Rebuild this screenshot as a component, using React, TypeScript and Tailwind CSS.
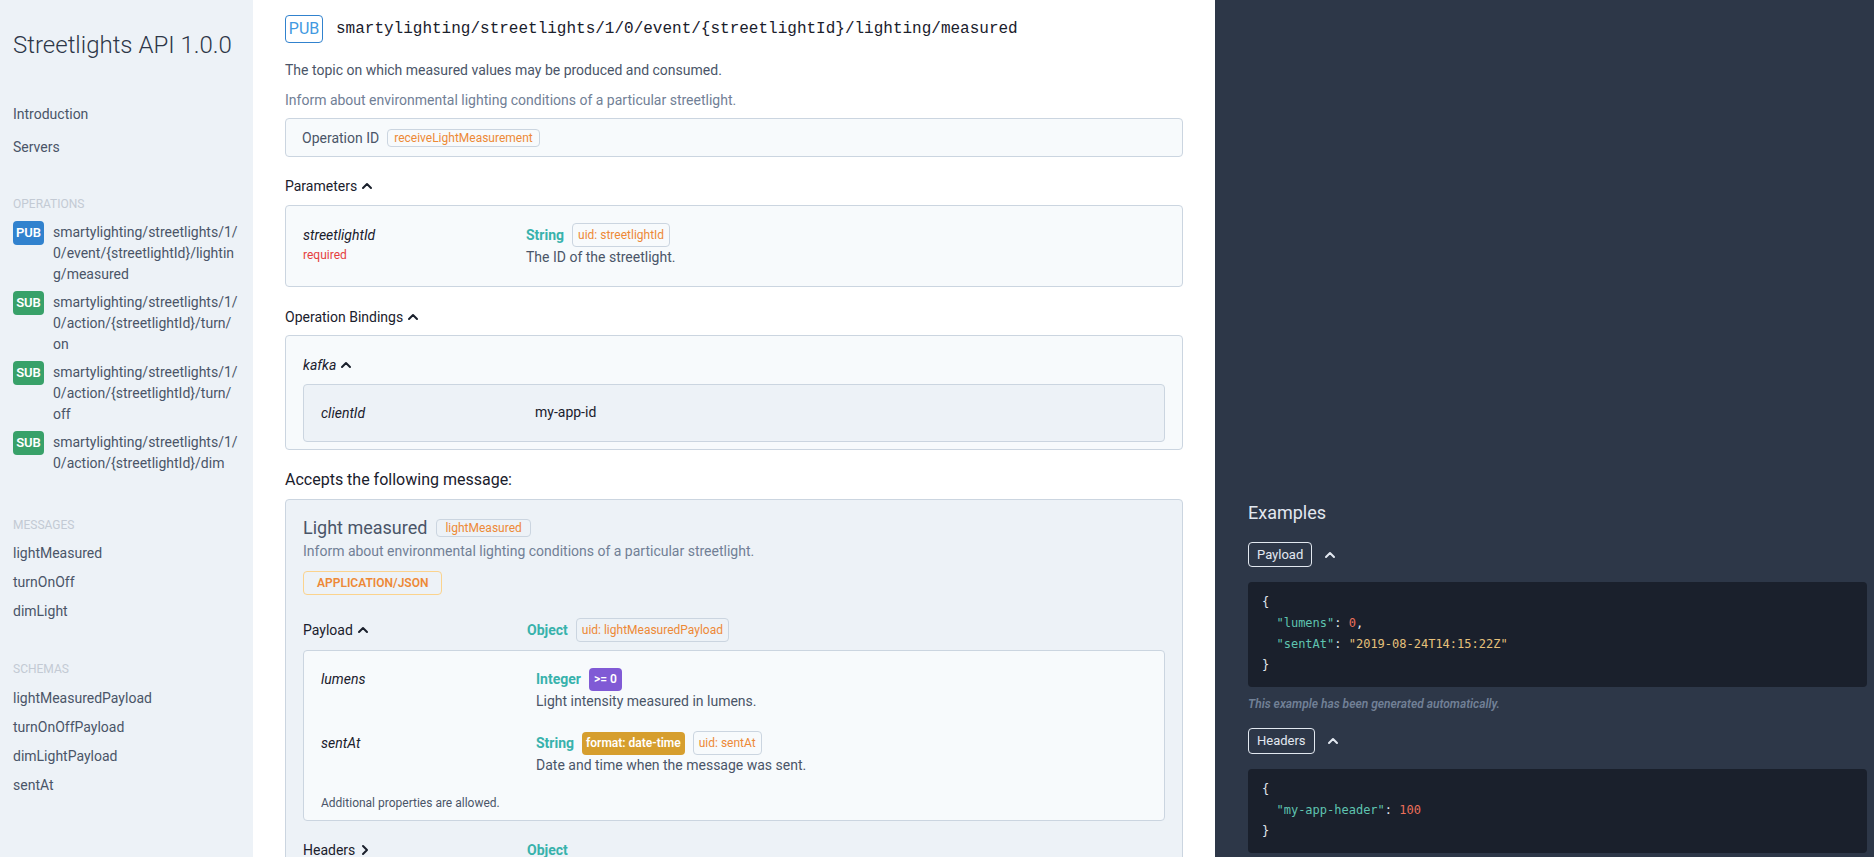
import React from 'react';

const sans = "font-['Roboto',sans-serif]";

function Caret({ up = true, className = '' }: { up?: boolean; className?: string }) {
  return (
    <svg viewBox="0 0 12 12" className={`h-3 w-3 ${className}`} fill="none" stroke="currentColor" strokeWidth="2" strokeLinecap="round" strokeLinejoin="round">
      {up ? <polyline points="2,8 6,4 10,8" /> : <polyline points="4,2 8,6 4,10" />}
    </svg>
  );
}

function Uid({ children }: { children: React.ReactNode }) {
  return (
    <span className="inline-flex h-6 items-center rounded border border-[#cbd5e0] px-[5px] text-xs text-[#ed8936]">
      {children}
    </span>
  );
}

const operations = [
  { kind: 'PUB', lines: ['smartylighting/streetlights/1/', '0/event/{streetlightId}/lightin', 'g/measured'] },
  { kind: 'SUB', lines: ['smartylighting/streetlights/1/', '0/action/{streetlightId}/turn/', 'on'] },
  { kind: 'SUB', lines: ['smartylighting/streetlights/1/', '0/action/{streetlightId}/turn/', 'off'] },
  { kind: 'SUB', lines: ['smartylighting/streetlights/1/', '0/action/{streetlightId}/dim'] },
];

function Sidebar() {
  return (
    <aside className="w-[253px] shrink-0 bg-[#edf2f7] px-[13px] pt-[29px] text-[#4a5568]">
      <h1 className="text-2xl leading-8 font-light text-[#2d3748]">Streetlights API 1.0.0</h1>
      <div className="mt-[43px] flex flex-col gap-[13px] text-sm leading-5">
        <div>Introduction</div>
        <div>Servers</div>
      </div>
      <div className="mt-[39px] text-xs leading-4 text-[#c3cad4] uppercase">Operations</div>
      <div className="mt-[10px] flex flex-col gap-[7px]">
        {operations.map((op, i) => (
          <div key={i} className="flex gap-[9px]">
            <span
              className={`mt-[-1px] flex h-6 w-[31px] shrink-0 items-center justify-center rounded text-[13px] font-semibold text-white ${op.kind === 'PUB' ? 'bg-[#3182ce]' : 'bg-[#38a169]'}`}
            >
              {op.kind}
            </span>
            <div className="text-sm leading-[21px]">
              {op.lines.map((l) => (
                <div key={l}>{l}</div>
              ))}
            </div>
          </div>
        ))}
      </div>
      <div className="mt-[43px] text-xs leading-4 text-[#c3cad4] uppercase">Messages</div>
      <div className="mt-[10px] flex flex-col gap-[9px] text-sm leading-5">
        <div>lightMeasured</div>
        <div>turnOnOff</div>
        <div>dimLight</div>
      </div>
      <div className="mt-[40px] text-xs leading-4 text-[#c3cad4] uppercase">Schemas</div>
      <div className="mt-[11px] flex flex-col gap-[9px] text-sm leading-5">
        <div>lightMeasuredPayload</div>
        <div>turnOnOffPayload</div>
        <div>dimLightPayload</div>
        <div>sentAt</div>
      </div>
    </aside>
  );
}

function Main() {
  return (
    <main className="w-[962px] shrink-0 overflow-hidden bg-white px-8 pt-[15px] text-[#2d3748]">
      <div className="flex h-7 items-center gap-[13px]">
        <span className="flex h-7 w-[38px] items-center justify-center rounded border border-[#3182ce] text-base text-[#4299e1]">
          PUB
        </span>
        <span className="font-['Liberation_Mono',monospace] text-base text-[#1a202c]">
          smartylighting/streetlights/1/0/event/{'{streetlightId}'}/lighting/measured
        </span>
      </div>
      <p className="mt-[17px] text-sm leading-5 text-[#4a5568]">The topic on which measured values may be produced and consumed.</p>
      <p className="mt-[10px] text-sm leading-5 text-[#718096]">Inform about environmental lighting conditions of a particular streetlight.</p>

      <div className="mt-2 flex h-[39px] items-center gap-2 rounded border border-[#cbd5e0] bg-[#f7fafc] px-4 text-sm text-[#4a5568]">
        <span>Operation ID</span>
        <span className="inline-flex h-[18px] items-center rounded border border-[#cbd5e0] px-[6px] text-xs text-[#ed8936]">
          receiveLightMeasurement
        </span>
      </div>

      <div className="mt-[19px] flex items-center gap-1 text-sm leading-5 text-[#1a202c]">
        Parameters <Caret />
      </div>
      <div className="mt-[9px] flex rounded border border-[#cbd5e0] bg-[#f7fafc] px-[17px] pt-[17px] pb-[19px]">
        <div className="w-[223px] shrink-0">
          <div className="flex h-6 items-center text-sm text-[#1a202c] italic">streetlightId</div>
          <div className="text-xs leading-4 text-[#e53e3e]">required</div>
        </div>
        <div>
          <div className="flex h-6 items-center gap-2">
            <span className="text-sm font-bold text-[#38b2ac]">String</span>
            <Uid>uid: streetlightId</Uid>
          </div>
          <div className="text-sm leading-5 text-[#4a5568]">The ID of the streetlight.</div>
        </div>
      </div>

      <div className="mt-[20px] flex items-center gap-1 text-sm leading-5 text-[#1a202c]">
        Operation Bindings <Caret />
      </div>
      <div className="mt-2 rounded border border-[#cbd5e0] bg-[#f7fafc] px-[17px] pt-[19px] pb-[7px]">
        <div className="flex items-center gap-1 text-sm leading-5 text-[#1a202c] italic">
          kafka <Caret className="not-italic" />
        </div>
        <div className="mt-[9px] flex h-[58px] items-center rounded border border-[#cbd5e0] bg-[#edf2f7] px-[17px] text-sm text-[#1a202c]">
          <span className="w-[214px] shrink-0 italic">clientId</span>
          <span className="-mt-[3px]">my-app-id</span>
        </div>
      </div>

      <h3 className="mt-[18px] text-base leading-6 text-[#1a202c]">Accepts the following message:</h3>
      <div className="mt-[7px] rounded border border-[#cbd5e0] bg-[#edf2f7] px-[17px] pt-[15px] pb-8">
        <div className="flex h-[26px] items-center gap-[9px]">
          <span className="text-lg text-[#4a5568]">Light measured</span>
          <span className="inline-flex h-[18px] items-center rounded border border-[#cbd5e0] px-[8px] text-xs text-[#ed8936]">
            lightMeasured
          </span>
        </div>
        <p className="text-sm leading-5 text-[#718096]">Inform about environmental lighting conditions of a particular streetlight.</p>
        <span className="mt-[10px] inline-flex h-[24px] items-center rounded border border-[#fbd38d] px-[13px] text-xs font-semibold text-[#ed8936]">
          APPLICATION/JSON
        </span>

        <div className="mt-[23px] flex h-6 items-center">
          <div className="flex w-[224px] shrink-0 items-center gap-1 text-sm text-[#1a202c]">
            Payload <Caret />
          </div>
          <span className="mr-2 text-sm font-bold text-[#38b2ac]">Object</span>
          <Uid>uid: lightMeasuredPayload</Uid>
        </div>
        <div className="mt-2 rounded border border-[#cbd5e0] bg-[#f7fafc] px-[17px] pt-[16px] pb-[9px]">
          <div className="flex flex-col gap-[20px]">
            <div className="flex">
              <div className="flex h-6 w-[215px] shrink-0 items-center text-sm text-[#1a202c] italic">lumens</div>
              <div>
                <div className="flex h-6 items-center gap-2">
                  <span className="text-sm font-bold text-[#38b2ac]">Integer</span>
                  <span className="inline-flex h-[23px] items-center rounded bg-[#805ad5] px-[5px] text-xs font-semibold text-white">&gt;= 0</span>
                </div>
                <div className="text-sm leading-5 text-[#4a5568]">Light intensity measured in lumens.</div>
              </div>
            </div>
            <div className="flex">
              <div className="flex h-6 w-[215px] shrink-0 items-center text-sm text-[#1a202c] italic">sentAt</div>
              <div>
                <div className="flex h-6 items-center gap-2">
                  <span className="text-sm font-bold text-[#38b2ac]">String</span>
                  <span className="inline-flex h-[23px] items-center rounded bg-[#d69e2e] px-[4px] text-xs font-semibold text-white">format: date-time</span>
                  <Uid>uid: sentAt</Uid>
                </div>
                <div className="text-sm leading-5 text-[#4a5568]">Date and time when the message was sent.</div>
              </div>
            </div>
            <div className="text-xs leading-4 text-[#4a5568]">Additional properties are allowed.</div>
          </div>
        </div>

        <div className="mt-[17px] flex h-6 items-center">
          <div className="flex w-[224px] shrink-0 items-center gap-1 text-sm text-[#1a202c]">
            Headers <Caret up={false} />
          </div>
          <span className="text-sm font-bold text-[#38b2ac]">Object</span>
        </div>
      </div>
    </main>
  );
}

function Code({ lines }: { lines: React.ReactNode[] }) {
  return (
    <pre className="rounded bg-[#1a202c] px-[14px] pt-[10px] pb-[11px] font-['DejaVu_Sans_Mono',monospace] text-xs leading-[21px] text-[#e2e8f0]">
      {lines.map((l, i) => (
        <div key={i}>{l}</div>
      ))}
    </pre>
  );
}

const key = 'text-[#5fc4b1]';
const num = 'text-[#ec6f5a]';
const str = 'text-[#e6c07b]';

function Examples() {
  return (
    <section className="min-w-0 flex-1 bg-[#2d3748] pt-[499px] pr-[7px] pl-[33px] text-[#e2e8f0]">
      <h2 className="text-lg leading-7">Examples</h2>
      <div className="mt-[15px] flex items-center gap-[12px]">
        <span className="flex h-[25px] items-center rounded border border-[#e2e8f0] px-[8px] text-[13px]">Payload</span>
        <Caret />
      </div>
      <div className="mt-[15px]">
        <Code
          lines={[
            '{',
            <>
              {'  '}
              <span className={key}>"lumens"</span>: <span className={num}>0</span>,
            </>,
            <>
              {'  '}
              <span className={key}>"sentAt"</span>: <span className={str}>"2019-08-24T14:15:22Z"</span>
            </>,
            '}',
          ]}
        />
      </div>
      <p className="mt-[9px] text-xs leading-4 font-semibold text-[#718096] italic">This example has been generated automatically.</p>
      <div className="mt-[16px] flex items-center gap-[12px]">
        <span className="flex h-[26px] items-center rounded border border-[#e2e8f0] px-[8px] text-[13px]">Headers</span>
        <Caret />
      </div>
      <div className="mt-[15px]">
        <Code
          lines={[
            '{',
            <>
              {'  '}
              <span className={key}>"my-app-header"</span>: <span className={num}>100</span>
            </>,
            '}',
          ]}
        />
      </div>
    </section>
  );
}

export default function App() {
  return (
    <div className={`flex h-[857px] w-full overflow-hidden ${sans}`}>
      <Sidebar />
      <Main />
      <Examples />
    </div>
  );
}
